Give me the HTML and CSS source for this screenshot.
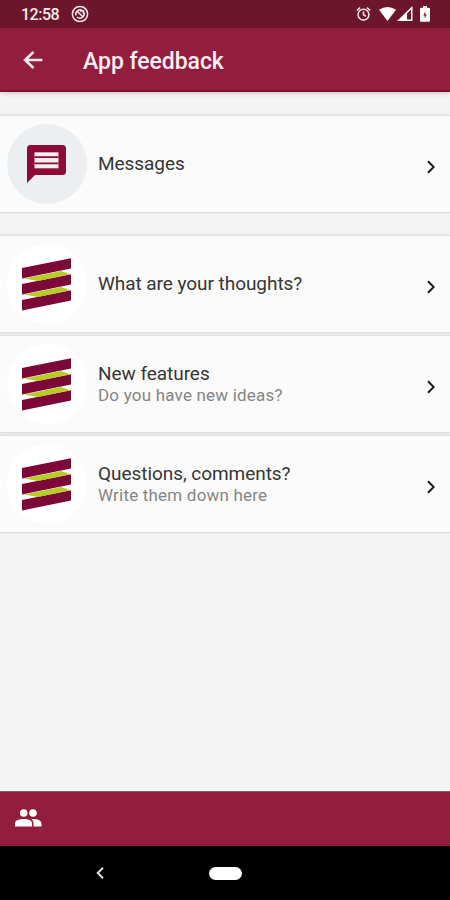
FILE: index.html
```html
<!DOCTYPE html>
<html lang="en">
<head>
<meta charset="utf-8">
<title>App feedback</title>
<link rel="stylesheet" href="styles.css">
</head>
<body>
<svg width="0" height="0" class="defs" aria-hidden="true">
  <symbol id="logo" viewBox="0 0 49 53">
    <path fill="#7c0838" d="M0 10 49 .3V10.500L0 20.500zM0 26l49-9.700V26.500L0 36.500zM0 42l49-9.700V42.500L0 52.500z"/>
    <path fill="#b5cc24" d="M2 20.400 39 13l9.500 3.200L16 23zM2 36.400 39 29l9.500 3.200L16 39z"/>
  </symbol>
  <symbol id="chevron" viewBox="0 0 8 14">
    <path fill="none" stroke="#1b1b1b" stroke-width="2" d="m1 1.300 5.700 5.700L1 12.700"/>
  </symbol>
</svg>
<div class="screen">
  <div class="status">
    <span class="time">12:58</span>
    <svg class="sync" width="18" height="18" viewBox="0 0 18 18" fill="none" stroke="#f5e9ed">
      <circle cx="9" cy="9" r="7.600" stroke-width="1.500"/>
      <path stroke-width="1.500" d="M5 10.500a4.300 4.300 0 0 1 7-4.500M13 7.500a4.300 4.300 0 0 1-7 4.500M6.500 6.500l5.500 5.500M9 6h3.500v3"/>
    </svg>
    <svg class="alarm" width="15" height="16" viewBox="0 0 16 16" fill="none" stroke="#f0e2e7" stroke-width="1.700">
      <circle cx="8" cy="8.700" r="5.800"/>
      <path d="M8 5.200v3.700l2.700 1.700M1 4.100 4.300 1.300M15 4.100l-3.300-2.800"/>
    </svg>
    <svg class="wifi" width="17" height="16" viewBox="0 0 18 16"><path fill="#fff" d="M0 3.600Q9-2.600 18 3.600L9 15.300z"/></svg>
    <svg class="signal" width="16" height="16" viewBox="0 0 16 16"><path fill="#fff" fill-rule="evenodd" d="M0 15 15.500 0v15zM10 7.400v6.100h4V3.500z"/></svg>
    <svg class="battery" width="10" height="16" viewBox="0 0 10 16"><path fill="#fff" fill-rule="evenodd" d="M3 0h4v1.700h1.700q1.300 0 1.300 1.300v11.500q0 1.300-1.300 1.300H1.300Q0 15.800 0 14.500V3q0-1.300 1.300-1.300H3zM5.300 5.500 3.300 9.500h1.400v3l2-3.900H5.300z"/></svg>
  </div>
  <header class="header">
    <svg width="20" height="18" viewBox="0 0 20 18" fill="none" stroke="#fbe9ee" stroke-width="2.500"><path d="M19.300 9H2.200M10.500 1 2 9l8.500 8"/></svg>
    <h1>App feedback</h1>
  </header>
  <main>
    <div class="card first">
      <div class="avatar gray">
        <svg width="39" height="39" viewBox="0 0 39 39"><path fill="#8c0c36" d="M3.500 0h32Q39 0 39 3.500v23q0 3.500-3.500 3.500H8L0 38V3.500Q0 0 3.500 0z"/><path fill="#f4edf1" d="M7.500 7.300h24v16h-24z"/><path stroke="#8c0c36" stroke-width="1.700" d="M7.500 12.200h24M7.500 18.300h24"/></svg>
      </div>
      <div class="text"><div class="title">Messages</div></div>
      <svg class="chev"><use href="#chevron"/></svg>
    </div>
    <div class="card">
      <div class="avatar"><svg width="49" height="53"><use href="#logo"/></svg></div>
      <div class="text"><div class="title">What are your thoughts?</div></div>
      <svg class="chev"><use href="#chevron"/></svg>
    </div>
    <div class="card">
      <div class="avatar"><svg width="49" height="53"><use href="#logo"/></svg></div>
      <div class="text pair"><div class="title">New features</div><div class="sub">Do you have new ideas?</div></div>
      <svg class="chev"><use href="#chevron"/></svg>
    </div>
    <div class="card">
      <div class="avatar"><svg width="49" height="53"><use href="#logo"/></svg></div>
      <div class="text pair"><div class="title">Questions, comments?</div><div class="sub">Write them down here</div></div>
      <svg class="chev"><use href="#chevron"/></svg>
    </div>
  </main>
  <footer class="tabs">
    <svg width="27" height="18" viewBox="0 0 27 18" fill="#fff"><circle cx="8.700" cy="4" r="3.800"/><circle cx="18" cy="4" r="3.800"/><path d="M0 17.500v-3C0 11 5 10 8.800 10s8.200 1 8.200 4.500v3zM16.500 10c5-.2 10 1 10 4.500v3h-8v-3q0-2.800-2-4.500z"/></svg>
  </footer>
  <nav class="system">
    <svg width="8" height="12" viewBox="0 0 8 12" fill="none" stroke="#ddd" stroke-width="2"><path d="M7 .8 1.700 6 7 11.200"/></svg>
    <span class="pill"></span>
  </nav>
</div>
</body>
</html>
```
FILE: styles.css
```css
* { box-sizing: border-box; }
body { margin: 0; font-family: Roboto, "Liberation Sans", sans-serif; }
.defs { position: absolute; }
.screen { width: 450px; height: 900px; display: flex; flex-direction: column; background: #f4f4f4; overflow: hidden; }
.status { height: 28px; flex: none; background: #6d152c; display: flex; align-items: center; padding: 0 20px 0 21px; }
.time { color: #f8ecef; font-size: 16px; font-weight: 500; line-height: 28px; width: 50px; padding-top: 2px; letter-spacing: -0.5px; white-space: nowrap; }
.alarm { margin-left: auto; }
.wifi { margin-left: 8px; }
.signal { margin-left: 1px; }
.battery { margin-left: 7px; }
.header { height: 64px; flex: none; background: #931d3f; border-bottom: 2px solid #83102f; display: flex; align-items: center; padding: 2px 0 0 23px; box-shadow: 0 1px 5px rgba(0, 0, 0, .2); }
h1 { margin: 3px 0 0 40px; color: #fceef2; font-size: 23px; font-weight: 500; line-height: 28px; letter-spacing: -0.05px; white-space: nowrap; }
main { flex: 1; padding-top: 23px; }
.card { height: 98px; margin-bottom: 2px; border-top: 1px solid #e2e2e2; border-bottom: 1px solid #dedede; background: #fbfbfb; box-shadow: 0 0 2px rgba(0, 0, 0, .13); display: flex; align-items: center; padding: 0 14px 0 7px; }
.first { margin-bottom: 22px; }
.avatar { width: 80px; height: 80px; border-radius: 50%; background: #fff; display: flex; align-items: center; justify-content: center; flex: none; }
.avatar svg { margin-right: 1px; }
.gray { background: #eceff1; }
.text { margin-left: 11px; flex: 1; }
.first .text { margin-top: -1px; }
.pair { margin-top: -1px; }
.title { color: #363636; font-size: 19px; line-height: 22px; letter-spacing: -0.05px; white-space: nowrap; }
.sub { color: #858585; font-size: 17px; line-height: 20px; letter-spacing: .2px; white-space: nowrap; }
.chev { width: 8px; height: 14px; margin: 5px 1px 0 0; }
.tabs { height: 55px; flex: none; background: #931d3f; border-top: 1px solid #9e5068; padding: 17px 0 0 15px; }
.tabs svg { display: block; }
.system { height: 54px; flex: none; background: #000; display: flex; align-items: center; padding-left: 96px; }
.pill { width: 33px; height: 13px; margin-left: 105px; border-radius: 7px; background: #fff; }
```
